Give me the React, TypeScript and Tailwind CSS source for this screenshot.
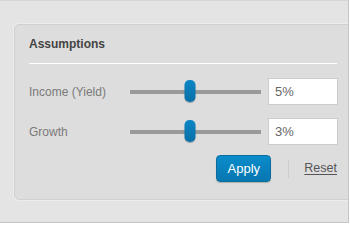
import { useState } from "react";

type Assumption = { id: string; label: string; value: number };

const initial: Assumption[] = [
  { id: "yield", label: "Income (Yield)", value: 5 },
  { id: "growth", label: "Growth", value: 3 },
];

function SliderRow({ item }: { item: Assumption }) {
  // thumb sits at the same place for both rows in the mockup
  const percent = 46;
  return (
    <div className="flex items-center">
      <span className="w-[101px] shrink-0 text-[12px] text-[#7a7a7a]">{item.label}</span>
      <div className="relative flex h-[27px] w-[131px] items-center">
        <div className="h-[4px] w-full bg-[#999999]" />
        <div
          className="absolute top-[2px] h-[22px] w-[11px] -translate-x-1/2 rounded-[5px] bg-gradient-to-b from-[#0a86c6] to-[#0a6fa6] shadow-[0_1px_1px_rgba(0,0,0,0.25)]"
          style={{ left: `${percent}%` }}
        />
      </div>
      <input
        type="text"
        readOnly
        value={`${item.value}%`}
        className="ml-[7px] h-[27px] w-[70px] border border-[#cccccc] bg-white px-[6px] text-[13px] text-[#666666] outline-none"
      />
    </div>
  );
}

export default function App() {
  const [items] = useState(initial);

  return (
    <div
      className="h-[223px] w-[349px] overflow-hidden border-t border-r border-b border-t-[#d6d6d6] border-r-[#c4c4c4] border-b-[#c4c4c4] bg-[#e4e4e4] pt-[23px] pl-[14px]"
      style={{ fontFamily: '"Liberation Sans", Arial, sans-serif' }}
    >
      <div className="h-[176px] w-[340px] rounded-[5px] border border-[#d0d0d0] bg-[#dddddd] pt-[11px] pl-[14px] shadow-[0_0_0_1px_#ececec]">
        <h2 className="text-[12px] leading-[16px] font-bold text-[#444444]">Assumptions</h2>
        <div className="mt-[11px] h-px w-[308px] border-b border-white bg-[#cfcfcf]" />

        <div className="mt-[14px] flex flex-col gap-[13px]">
          {items.map((item) => (
            <SliderRow key={item.id} item={item} />
          ))}
        </div>

        <div className="mt-[10px] flex w-[308px] items-center justify-end">
          <button
            type="button"
            className="h-[27px] w-[55px] rounded-[4px] border border-[#0b6c9e] bg-gradient-to-b from-[#0a8ccb] to-[#0877b1] text-[13px] text-white shadow-[0_1px_1px_rgba(0,0,0,0.2)]"
          >
            Apply
          </button>
          <div className="mr-[15px] ml-[17px] h-[18px] w-px bg-[#cccccc]" />
          <a className="text-[12.5px] text-[#555555] underline underline-offset-2">Reset</a>
        </div>
      </div>
    </div>
  );
}
